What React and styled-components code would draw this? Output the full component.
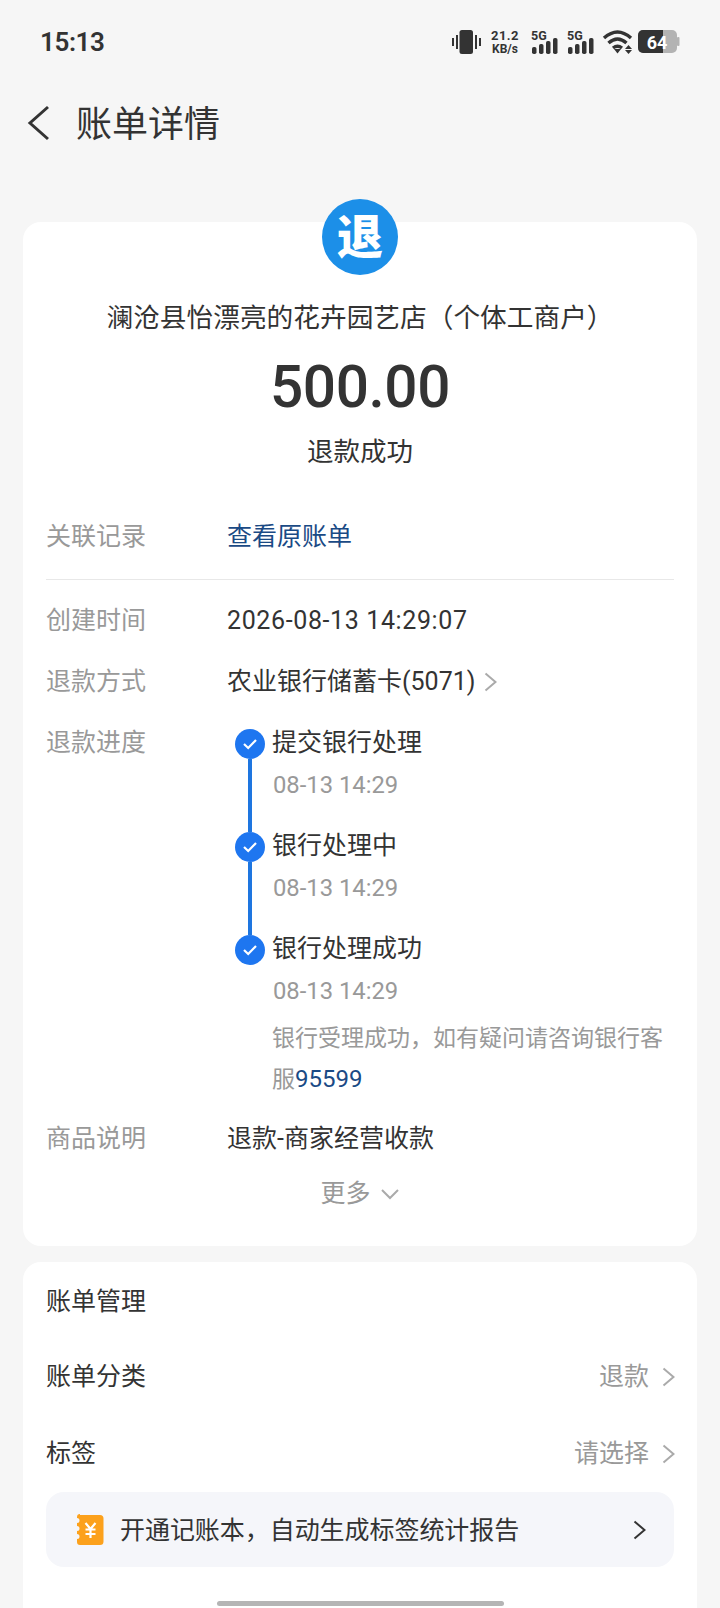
import React from 'react';
import styled, { createGlobalStyle } from 'styled-components';

const Global = createGlobalStyle`
  html, body { margin: 0; padding: 0; background: #f6f6f6; }
  * { box-sizing: border-box; }
`;
const FONT = `Roboto, "Noto Sans CJK SC", sans-serif`;
const Page = styled.div`
  width: 720px; height: 1608px; overflow: hidden; position: relative;
  background: #f6f6f6; font-family: ${FONT}; color: #333; font-size: 25px;
`;
const StatusBar = styled.div`
  height: 82px; display: flex; align-items: center; justify-content: space-between;
  padding: 2px 0 0 40px;
`;
const Clock = styled.span`font-size: 26px; font-weight: 600; color: #333; line-height: 1; letter-spacing: -0.4px;`;
const Indicators = styled.div`display: flex; margin-right: 38px; height: 26px;`;
const Nav = styled.div`height: 82px; display: flex; align-items: center; padding-left: 27px;`;
const NavTitle = styled.h1`margin: 4px 0 0 25px; font-size: 36px; font-weight: 400; color: #333; line-height: 48px;`;
const Card = styled.section`
  display: flow-root;
  margin: ${p => p.$top}px 23px 0; background: #fff; border-radius: 18px; padding: 0 23px;
  height: ${p => p.$h}px;
`;
const Badge = styled.div`
  width: 76px; height: 76px; margin: -23px auto 0; border-radius: 50%; background: #1c8fe8;
  color: #fff; font-size: 46px; font-weight: 900; display: flex; align-items: center; justify-content: center; line-height: 1;
`;
const Merchant = styled.div`margin-top: 23px; text-align: center; font-size: 26.7px; line-height: 40px; white-space: nowrap;`;
const Amount = styled.div`margin-top: 14px; text-align: center; font-size: 58.5px; font-weight: 500; line-height: 70px; letter-spacing: -0.4px; color: #333;`;
const StatusText = styled.div`margin-top: 10px; text-align: center; font-size: 26.5px; line-height: 40px;`;
const Row = styled.div`
  display: grid; grid-template-columns: 181px 1fr; margin-top: ${p => p.$top}px; line-height: 40px;
`;
const Label = styled.span`color: #999;`;
const Value = styled.span`display: flex; align-items: center; gap: 9px; color: #333; white-space: nowrap;`;
const DateValue = styled(Value)`letter-spacing: 0.62px;`;
const LinkText = styled.span`color: #1a4a85;`;
const PhoneLink = styled(LinkText)`font-size: 24px;`;
const Divider = styled.div`height: 1px; background: #e8e8e8; margin-top: 22px;`;
const Timeline = styled.div`padding-left: 8px;`;
const Step = styled.div`
  display: grid; grid-template-columns: 30px 1fr; column-gap: 8px; min-height: ${p => p.$h || 103}px;
`;
const Rail = styled.div`display: flex; flex-direction: column; align-items: center; padding-top: 6px;`;
const Dot = styled.span`
  width: 30px; height: 30px; border-radius: 50%; background: #1e76f0; flex: none;
  display: flex; align-items: center; justify-content: center;
`;
const RailLine = styled.span`width: 4px; flex: 1; background: #1e76e0; margin-bottom: -6px;`;
const StepBody = styled.div`display: flex; flex-direction: column; margin-left: -1px;`;
const StepTitle = styled.span`line-height: 40px; color: #333;`;
const StepTime = styled.span`margin: 2px 0 0 1px; line-height: 40px; color: #999; font-size: 23.8px;`;
const Note = styled.div`margin-top: 8px; font-size: 23px; line-height: 40px; color: #999;`;
const More = styled.div`
  margin-top: 15px; display: flex; justify-content: center; align-items: center; gap: 9px;
  color: #999; line-height: 40px;
`;
const SectionTitle = styled.div`padding-top: 20px; line-height: 40px; color: #333;`;
const ManageRow = styled.div`
  display: flex; justify-content: space-between; align-items: center; line-height: 40px;
  margin-top: ${p => p.$top}px;
`;
const Right = styled.span`display: flex; align-items: center; gap: 13px; color: #999; margin-right: -1px;`;
const Banner = styled.div`
  margin-top: 18px; height: 75px; border-radius: 18px; background: #f5f6fa;
  display: flex; align-items: center; padding: 0 28px 0 30px; color: #333;
`;
const BannerText = styled.span`flex: 1; margin-left: 16px; margin-top: -3px; letter-spacing: -0.05px;`;
const HomeBar = styled.div`
  position: absolute; left: 217px; top: 1601px; width: 287px; height: 5px; border-radius: 3px; background: #b5b5b5;
`;

const Chevron = ({ color = '#aaa', w = 13, h = 20, sw = 2 }) => (
  <svg width={w} height={h} viewBox="0 0 13 20" fill="none" stroke={color} strokeWidth={sw}>
    <path d="M1.5 1.5 L11.5 10 L1.5 18.5" />
  </svg>
);

const Status = () => (
  <svg width="232" height="26" viewBox="0 0 232 26" fill="#333">
    <rect x="2" y="9" width="2" height="8" />
    <rect x="6" y="6" width="2" height="14" />
    <rect x="9.5" y="1" width="13.5" height="24" rx="2.5" />
    <rect x="25" y="6" width="2" height="14" />
    <rect x="29" y="9" width="2" height="8" />
    <text x="55" y="11" fontSize="13" fontWeight="700" textAnchor="middle" fontFamily="Roboto, sans-serif" letterSpacing=".5">21.2</text>
    <text x="55" y="24" fontSize="12" fontWeight="700" textAnchor="middle" fontFamily="Roboto, sans-serif">KB/s</text>
    {[0, 36].map(o => (
      <g key={o} transform={`translate(${81 + o},0)`}>
        <text x="0" y="10.5" fontSize="12.5" fontWeight="700" fontFamily="Roboto, sans-serif">5G</text>
        <rect x="1" y="18" width="4.5" height="7" rx="1.8" />
        <rect x="8" y="15" width="4.5" height="10" rx="1.8" />
        <rect x="15" y="12" width="4.5" height="13" rx="1.8" />
        <rect x="22" y="9" width="4.5" height="16" rx="1.8" />
      </g>
    ))}
    <g fill="none" stroke="#333" strokeWidth="3.4">
      <path d="M154 9 Q167.5 -3 181 9" />
      <path d="M158.5 14 Q167.5 6 176.5 14" />
      <path d="M163 19 Q167.5 15.5 172 19" />
    </g>
    <path d="M164 20 L171 20 L167.5 24.5 Z" />
    <path d="M178.5 16 L182 20 L175 20 Z M175 21 L182 21 L178.5 25 Z" />
    <rect x="188" y="1" width="39" height="23" rx="5" fill="#b3b3b3" />
    <path d="M193 1 H213 V24 H193 a5 5 0 0 1 -5 -5 V6 a5 5 0 0 1 5 -5 Z" />
    <rect x="227" y="8" width="2.5" height="9" rx="1" fill="#b3b3b3" />
    <text x="207" y="19.5" fontSize="18" fontWeight="700" fill="#fff" textAnchor="middle" fontFamily="Roboto, sans-serif">64</text>
  </svg>
);

const Ticket = () => (
  <svg width="28" height="32" viewBox="0 0 28 32">
    <path fill="#fca11c" d="M4 1 H24 a3.5 3.5 0 0 1 3.5 3.5 V27.5 a3.5 3.5 0 0 1 -3.5 3.5 H4 a3 3 0 0 1 -3 -3 v-3 a2.5 2.5 0 0 0 0 -5 v-3 a2.5 2.5 0 0 0 0 -5 v-3 a2.5 2.5 0 0 0 0 -5 v-1 a3 3 0 0 1 3 -3 Z" />
    <path fill="none" stroke="#fff" strokeWidth="2.2" d="M9.5 9 L14.5 15 L19.5 9 M14.5 15 V24 M9.5 15.5 H19.5 M9.5 20 H19.5" />
  </svg>
);

const Check = () => (
  <svg width="16" height="12" viewBox="0 0 16 12" fill="none" stroke="#fff" strokeWidth="2.2">
    <path d="M2 6 L6.2 10 L14 2" />
  </svg>
);

const TimelineStep = ({ title, last, h, children }) => (
  <Step $h={h}>
    <Rail><Dot><Check /></Dot>{!last && <RailLine />}</Rail>
    <StepBody>
      <StepTitle>{title}</StepTitle>
      <StepTime>08-13 14:29</StepTime>
      {children}
    </StepBody>
  </Step>
);

export default function App() {
  return (
    <Page>
      <Global />
      <StatusBar><Clock>15:13</Clock><Indicators><Status /></Indicators></StatusBar>
      <Nav>
        <svg width="24" height="36" viewBox="0 0 24 36" fill="none" stroke="#333" strokeWidth="3"><path d="M21 2 L3 18 L21 34" /></svg>
        <NavTitle>账单详情</NavTitle>
      </Nav>
      <Card $top={58} $h={1024}>
        <Badge>退</Badge>
        <Merchant>澜沧县怡漂亮的花卉园艺店（个体工商户）</Merchant>
        <Amount>500.00</Amount>
        <StatusText>退款成功</StatusText>
        <Row $top={45}><Label>关联记录</Label><LinkText>查看原账单</LinkText></Row>
        <Divider />
        <Row $top={21}><Label>创建时间</Label><DateValue>2026-08-13 14:29:07</DateValue></Row>
        <Row $top={21}><Label>退款方式</Label><Value>农业银行储蓄卡(5071) <Chevron /></Value></Row>
        <Row $top={21}>
          <Label>退款进度</Label>
          <Timeline>
            <TimelineStep title="提交银行处理" />
            <TimelineStep title="银行处理中" />
            <TimelineStep title="银行处理成功" last h={150}>
              <Note>银行受理成功，如有疑问请咨询银行客<br />服<PhoneLink>95599</PhoneLink></Note>
            </TimelineStep>
          </Timeline>
        </Row>
        <Row $top={19}><Label>商品说明</Label><Value>退款-商家经营收款</Value></Row>
        <More>更多 <svg width="20" height="12" viewBox="0 0 20 12" fill="none" stroke="#aaa" strokeWidth="2"><path d="M2 2 L10 10 L18 2" /></svg></More>
      </Card>
      <Card $top={16} $h={400}>
        <SectionTitle>账单管理</SectionTitle>
        <ManageRow $top={35}><span>账单分类</span><Right>退款 <Chevron /></Right></ManageRow>
        <ManageRow $top={37}><span>标签</span><Right>请选择 <Chevron /></Right></ManageRow>
        <Banner>
          <Ticket />
          <BannerText>开通记账本，自动生成标签统计报告</BannerText>
          <Chevron color="#333" />
        </Banner>
      </Card>
      <HomeBar />
    </Page>
  );
}
